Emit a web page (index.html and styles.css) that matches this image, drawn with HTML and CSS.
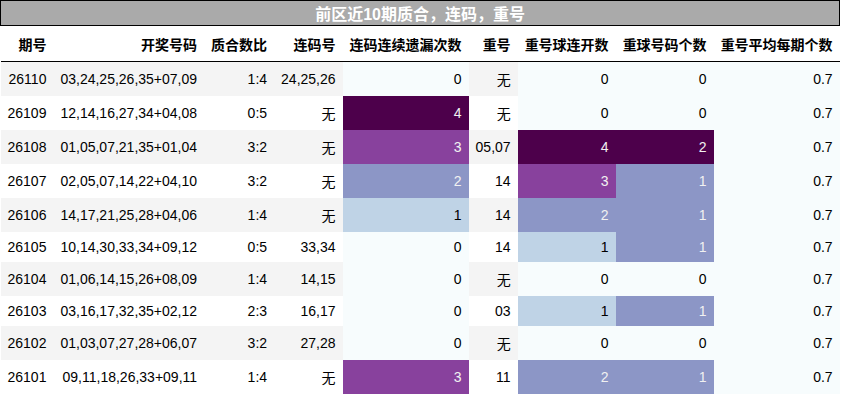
FILE: index.html
```html
<!DOCTYPE html>
<html lang="zh">
<head>
<meta charset="utf-8">
<title>前区近10期质合，连码，重号</title>
<link rel="stylesheet" href="styles.css">
</head>
<body>
<table class="stats">
  <thead>
    <tr><th class="title" colspan="9">前区近10期质合，连码，重号</th></tr>
    <tr class="head">
      <th>期号</th><th>开奖号码</th><th>质合数比</th><th>连码号</th><th>连码连续遗漏次数</th><th>重号</th><th>重号球连开数</th><th>重球号码个数</th><th>重号平均每期个数</th>
    </tr>
  </thead>
  <tbody>
    <tr class="odd"><td>26110</td><td>03,24,25,26,35+07,09</td><td>1:4</td><td>24,25,26</td><td class="g0">0</td><td>无</td><td class="g0">0</td><td class="g0">0</td><td class="g0">0.7</td></tr>
    <tr><td>26109</td><td>12,14,16,27,34+04,08</td><td>0:5</td><td>无</td><td class="g4">4</td><td>无</td><td class="g0">0</td><td class="g0">0</td><td class="g0">0.7</td></tr>
    <tr class="odd"><td>26108</td><td>01,05,07,21,35+01,04</td><td>3:2</td><td>无</td><td class="g3">3</td><td>05,07</td><td class="g4">4</td><td class="g4">2</td><td class="g0">0.7</td></tr>
    <tr><td>26107</td><td>02,05,07,14,22+04,10</td><td>3:2</td><td>无</td><td class="g2">2</td><td>14</td><td class="g3">3</td><td class="g2">1</td><td class="g0">0.7</td></tr>
    <tr class="odd"><td>26106</td><td>14,17,21,25,28+04,06</td><td>1:4</td><td>无</td><td class="g1">1</td><td>14</td><td class="g2">2</td><td class="g2">1</td><td class="g0">0.7</td></tr>
    <tr><td>26105</td><td>10,14,30,33,34+09,12</td><td>0:5</td><td>33,34</td><td class="g0">0</td><td>14</td><td class="g1">1</td><td class="g2">1</td><td class="g0">0.7</td></tr>
    <tr class="odd"><td>26104</td><td>01,06,14,15,26+08,09</td><td>1:4</td><td>14,15</td><td class="g0">0</td><td>无</td><td class="g0">0</td><td class="g0">0</td><td class="g0">0.7</td></tr>
    <tr><td>26103</td><td>03,16,17,32,35+02,12</td><td>2:3</td><td>16,17</td><td class="g0">0</td><td>03</td><td class="g1">1</td><td class="g2">1</td><td class="g0">0.7</td></tr>
    <tr class="odd"><td>26102</td><td>01,03,07,27,28+06,07</td><td>3:2</td><td>27,28</td><td class="g0">0</td><td>无</td><td class="g0">0</td><td class="g0">0</td><td class="g0">0.7</td></tr>
    <tr><td>26101</td><td>09,11,18,26,33+09,11</td><td>1:4</td><td>无</td><td class="g3">3</td><td>11</td><td class="g2">2</td><td class="g2">1</td><td class="g0">0.7</td></tr>
  </tbody>
</table>
</body>
</html>
```

FILE: styles.css
```css
html, body {
  margin: 0;
  padding: 0;
  background: #ffffff;
}

body {
  font-family: "Liberation Sans", "Noto Sans CJK SC", sans-serif;
  font-size: 14px;
  color: #000000;
}

.stats {
  border-collapse: collapse;
  border-spacing: 0;
}

.stats th,
.stats td {
  padding: 7px;
  text-align: right;
  vertical-align: middle;
  white-space: nowrap;
}

.stats .title {
  background: #aaaaaa;
  color: #ffffff;
  font-size: 16px;
  font-weight: bold;
  text-align: center;
  border: 1px solid #000000;
  padding: 0;
}

.stats .head th {
  font-weight: bold;
  background: #ffffff;
  border-bottom: 1px solid #000000;
  padding-top: 8px;
}

.stats tbody tr {
  background: #ffffff;
}

.stats tbody tr.odd {
  background: #f4f4f4;
}

.stats td.g0 { background: #f7fcfd; color: #000000; }
.stats td.g1 { background: #bfd3e6; color: #000000; }
.stats td.g2 { background: #8c96c6; color: #f1f1f1; }
.stats td.g3 { background: #88419d; color: #f1f1f1; }
.stats td.g4 { background: #4d004b; color: #f1f1f1; }
```
